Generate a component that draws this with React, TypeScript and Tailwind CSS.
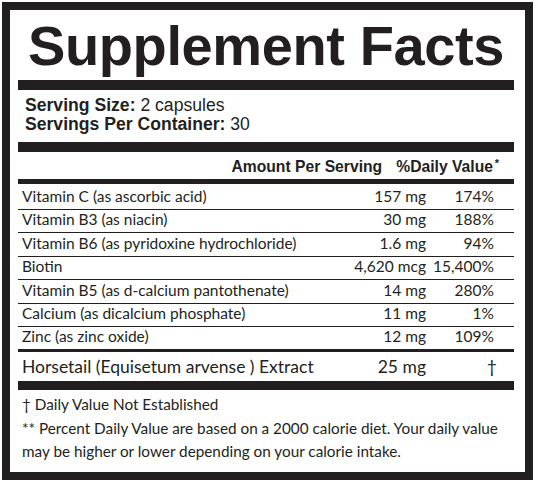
import React from 'react';

const ink = 'border-[#231f20]';

const rows = [
  { name: 'Vitamin C (as ascorbic acid)', amount: '157 mg', dv: '174%' },
  { name: 'Vitamin B3 (as niacin)', amount: '30 mg', dv: '188%' },
  { name: 'Vitamin B6 (as pyridoxine hydrochloride)', amount: '1.6 mg', dv: '94%' },
  { name: 'Biotin', amount: '4,620 mcg', dv: '15,400%' },
  { name: 'Vitamin B5 (as d-calcium pantothenate)', amount: '14 mg', dv: '280%' },
  { name: 'Calcium (as dicalcium phosphate)', amount: '11 mg', dv: '1%' },
  { name: 'Zinc (as zinc oxide)', amount: '12 mg', dv: '109%' },
];

export default function App() {
  return (
    <div className="w-[538px] h-[483px] bg-white pt-[2px] pl-[2px]">
      <div className={`w-[531px] h-[478px] border-8 ${ink} pl-2 pr-[11px] text-[#231f20]`}>
        {/* title */}
        <div className="h-[70px] pt-[2px] flex justify-center font-['Liberation_Sans',Arial,sans-serif] font-bold text-[56px] leading-[68px] tracking-[-0.4px]">
          Supplement Facts
        </div>
        <div className="h-[10px] bg-[#231f20]" />

        {/* serving info */}
        <div className="pt-[6px] pb-[8px] pl-[7px] font-['Liberation_Sans',Arial,sans-serif] text-[17.6px] leading-[19px]">
          <div>
            <span className="font-bold">Serving Size:</span> 2 capsules
          </div>
          <div>
            <span className="font-bold">Servings Per Container:</span> 30
          </div>
        </div>
        <div className="h-[10px] bg-[#231f20]" />

        {/* column header */}
        <div className="h-[27px] flex items-end justify-end gap-[14px] pr-[21px] pb-[3px] font-['Liberation_Sans',Arial,sans-serif] font-bold text-[15.7px] leading-[18px]">
          <span>Amount Per Serving</span>
          <span className="relative">
            %Daily Value<span className="absolute -right-[6px] -top-[4px] text-[11px]">*</span>
          </span>
        </div>
        <div className="h-[5px] bg-[#231f20]" />

        {/* nutrients */}
        <div className="pt-[2.6px] font-['Lato','Open_Sans',sans-serif] text-[15.5px]">
          {rows.map((r, i) => (
            <div
              key={r.name}
              className={`flex items-end pl-[4px] pr-[20px] pb-[4px] ${
                i === rows.length - 1 ? 'border-b-[3px] h-[25.4px]' : 'border-b h-[23.4px]'
              } ${ink}`}
            >
              <span className="flex-1 leading-[18px]">{r.name}</span>
              <span className="leading-[18px] text-right">{r.amount}</span>
              <span className="w-[68px] leading-[18px] text-right">{r.dv}</span>
            </div>
          ))}
          <div className="h-[29px] flex items-center pl-[4px] pr-[20px] text-[17.5px]">
            <span className="flex-1">Horsetail (Equisetum arvense ) Extract</span>
            <span className="text-right">25 mg</span>
            <span className="w-[68px] translate-x-[3px] text-right">†</span>
          </div>
        </div>
        <div className="h-[9px] bg-[#231f20]" />

        {/* footnotes */}
        <div className="pt-[3px] pl-[4px] font-['Lato','Open_Sans',sans-serif] text-[15.3px] leading-[23.5px]">
          <p>† Daily Value Not Established</p>
          <p>
            ** Percent Daily Value are based on a 2000 calorie diet. Your daily value
            <br />
            may be higher or lower depending on your calorie intake.
          </p>
        </div>
      </div>
    </div>
  );
}
